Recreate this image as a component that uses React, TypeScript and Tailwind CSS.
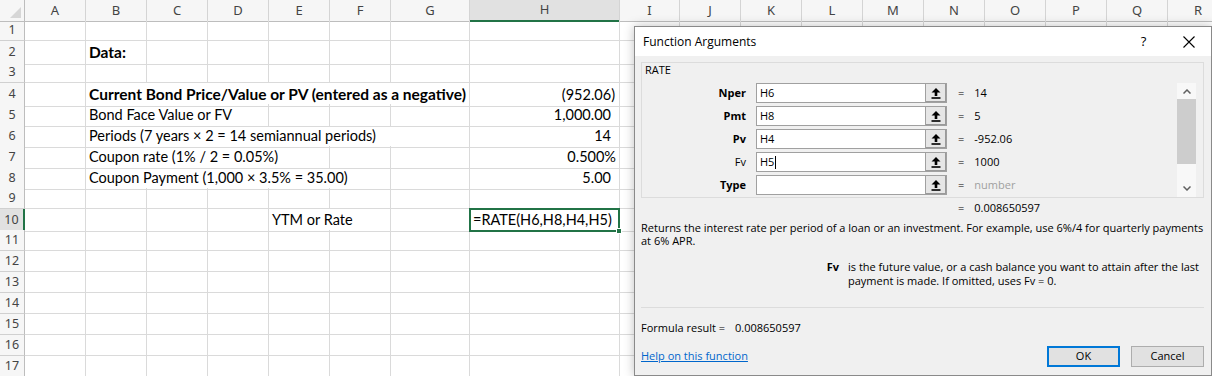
import React from 'react';

const COLS = ['A', 'B', 'C', 'D', 'E', 'F', 'G', 'H', 'I', 'J', 'K', 'L', 'M', 'N', 'O', 'P', 'Q', 'R'];

const GRID =
  'grid grid-cols-[25px_61px_61px_61px_61px_61px_61px_79px_150px_60px_61px_61px_61px_61px_61px_61px_61px_61px_61px]';

const SPAN: Record<number, string> = {
  1: '',
  2: 'col-span-2',
  3: 'col-span-3',
  4: 'col-span-4',
  5: 'col-span-5',
  6: 'col-span-6',
};

type Cell = {
  col: number;
  span?: number;
  text: string;
  bold?: boolean;
  right?: boolean;
  pr?: string;
  selected?: boolean;
};

// sheet contents, col index: A = 0
const DATA: Record<number, Cell[]> = {
  2: [{ col: 1, text: 'Data:', bold: true }],
  4: [
    { col: 1, span: 6, text: 'Current Bond Price/Value or PV (entered as a negative)', bold: true },
    { col: 7, text: '(952.06)', right: true, pr: 'pr-[4px]' },
  ],
  5: [
    { col: 1, span: 3, text: 'Bond Face Value or FV' },
    { col: 7, text: '1,000.00', right: true, pr: 'pr-[8px]' },
  ],
  6: [
    { col: 1, span: 6, text: 'Periods (7 years × 2 = 14 semiannual periods)' },
    { col: 7, text: '14', right: true, pr: 'pr-[8px]' },
  ],
  7: [
    { col: 1, span: 4, text: 'Coupon rate (1% / 2 = 0.05%)' },
    { col: 7, text: '0.500%', right: true, pr: 'pr-[3px]' },
  ],
  8: [
    { col: 1, span: 5, text: 'Coupon Payment (1,000 × 3.5% = 35.00)' },
    { col: 7, text: '5.00', right: true, pr: 'pr-[8px]' },
  ],
  10: [
    { col: 4, span: 2, text: 'YTM or Rate' },
    { col: 7, text: '=RATE(H6,H8,H4,H5)', selected: true },
  ],
};

const SheetRow: React.FC<{ n: number }> = ({ n }) => {
  const cells = DATA[n] || [];
  const out: React.ReactNode[] = [];
  let c = 0;
  while (c < COLS.length) {
    const cell = cells.find((x) => x.col === c);
    if (cell) {
      const span = cell.span || 1;
      out.push(
        <div
          key={c}
          className={`relative flex items-center whitespace-nowrap border-r border-b border-[#dadada] px-[3px] ${SPAN[span]} ${
            cell.right ? 'justify-end' : ''
          } ${cell.pr || ''} ${cell.bold ? 'font-bold text-[15.5px]' : ''}`}
        >
          {cell.text}
          {cell.selected && (
            <div className="absolute -left-px -top-px -right-px -bottom-px border-2 border-[#217346]">
              <div className="absolute -right-[4px] -bottom-[4px] h-[6px] w-[6px] border border-white bg-[#217346]" />
            </div>
          )}
        </div>
      );
      c += span;
    } else {
      out.push(<div key={c} className="border-r border-b border-[#dadada]" />);
      c += 1;
    }
  }
  const sel = n === 10;
  return (
    <div className={`${GRID} h-[21px]`}>
      <div
        className={`flex items-center justify-center border-b border-[#d0d0d0] text-[12.5px] text-[#444] ${
          sel ? 'border-r-2 border-r-[#217346] bg-[#e1e1e1]' : 'border-r border-r-[#bdbdbd] bg-[#f6f6f6]'
        }`}
        style={{ fontFamily: '"Noto Sans", sans-serif' }}
      >
        {n}
      </div>
      {out}
    </div>
  );
};

const RefIcon = () => (
  <svg width="10" height="11" viewBox="0 0 10 11">
    <path d="M5 0 L9.5 4.5 L6.3 4.5 L6.3 8 L3.7 8 L3.7 4.5 L0.5 4.5 Z" fill="#000" />
    <rect x="0.5" y="9.2" width="9" height="1.6" fill="#000" />
  </svg>
);

const ARGS = [
  { label: 'Nper', value: 'H6', result: '14', bold: true },
  { label: 'Pmt', value: 'H8', result: '5', bold: true },
  { label: 'Pv', value: 'H4', result: '-952.06', bold: true },
  { label: 'Fv', value: 'H5', result: '1000', bold: false, caret: true },
  { label: 'Type', value: '', result: 'number', bold: true, muted: true },
];

const Dialog = () => (
  <div
    className="absolute left-[634px] top-[26px] flex h-[350px] w-[578px] flex-col border border-[#8a8a8a] bg-[#f0f0f0] text-[11px] text-black shadow-[0_0_10px_rgba(0,0,0,0.25)]"
    style={{ fontFamily: '"Open Sans", sans-serif' }}
  >
    {/* title bar */}
    <div className="flex h-[29px] items-center bg-white pl-[8px]">
      <span className="flex-1 text-[12px]">Function Arguments</span>
      <div className="flex h-full w-[45px] items-center justify-center text-[13px]">?</div>
      <div className="flex h-full w-[45px] items-center justify-center">
        <svg width="12" height="12" viewBox="0 0 12 12">
          <path d="M0.5 0.5 L11.5 11.5 M11.5 0.5 L0.5 11.5" stroke="#000" strokeWidth="1.1" />
        </svg>
      </div>
    </div>

    <div className="flex flex-1 flex-col pl-[6px] pr-[7px]">
      {/* group box */}
      <div className="mt-[6px] flex h-[136px] flex-col border border-[#dcdcdc]">
        <div className="pl-[3px] leading-[14px]">RATE</div>
        <div className="mt-[6px] flex flex-1">
          <div className="flex flex-1 flex-col gap-[3px]">
            {ARGS.map((a) => (
              <div key={a.label} className="flex h-[20px] items-center">
                <div className={`w-[105px] pr-px text-right ${a.bold ? 'font-bold' : ''}`}>{a.label}</div>
                <div className="ml-[9px] flex h-full w-[170px] items-center border border-[#a0a0a0] bg-white pl-[3px]">
                  {a.value}
                  {a.caret && <span className="ml-px inline-block h-[13px] w-px bg-black" />}
                </div>
                <div className="flex h-full w-[21px] items-center justify-center border border-l-0 border-[#a0a0a0] bg-[#e6e6e6] shadow-[inset_-1px_-1px_0_#9a9a9a]">
                  <RefIcon />
                </div>
                <span className="ml-[11px]">=</span>
                <span className={`ml-[10px] ${a.muted ? 'text-[#a0a0a0]' : ''}`}>{a.result}</span>
              </div>
            ))}
          </div>
          <div className="mr-[7px] flex w-[19px] flex-col items-center bg-[#f8f8f8]">
            <div className="flex h-[16px] items-center">
              <svg width="8" height="5" viewBox="0 0 8 5">
                <path d="M0.5 4.5 L4 1 L7.5 4.5" fill="none" stroke="#606060" strokeWidth="1.5" />
              </svg>
            </div>
            <div className="h-[65px] w-full bg-[#cdcdcd]" />
            <div className="flex-1" />
            <div className="flex h-[18px] items-center">
              <svg width="8" height="5" viewBox="0 0 8 5">
                <path d="M0.5 0.5 L4 4 L7.5 0.5" fill="none" stroke="#606060" strokeWidth="1.5" />
              </svg>
            </div>
          </div>
        </div>
      </div>

      {/* overall result */}
      <div className="mt-[3px] flex leading-[14px]">
        <span className="ml-[317px]">=</span>
        <span className="ml-[10px]">0.008650597</span>
      </div>

      <div className="mt-[6px] whitespace-nowrap leading-[13px]">
        Returns the interest rate per period of a loan or an investment. For example, use 6%/4 for quarterly payments
        <br />
        at 6% APR.
      </div>

      <div className="mt-[13px] flex leading-[14px]">
        <div className="w-[198px] text-right font-bold">Fv</div>
        <div className="ml-[9px] whitespace-nowrap">
          is the future value, or a cash balance you want to attain after the last
          <br />
          payment is made. If omitted, uses Fv = 0.
        </div>
      </div>

      <div className="mt-[19px] h-px bg-[#dcdcdc]" />

      <div className="mt-[13px] flex leading-[14px]">
        <span>Formula result =</span>
        <span className="ml-[10px]">0.008650597</span>
      </div>

      <div className="mt-[11px] flex items-center">
        <span className="flex-1 text-[#0066cc] underline">Help on this function</span>
        <button className="flex h-[21px] w-[73px] items-center justify-center border-2 border-[#0078d7] bg-[#e1e1e1]">
          OK
        </button>
        <button className="ml-[11px] flex h-[21px] w-[73px] items-center justify-center border border-[#adadad] bg-[#e1e1e1]">
          Cancel
        </button>
      </div>
    </div>
  </div>
);

export default function App() {
  return (
    <div
      className="relative h-[376px] w-[1212px] overflow-hidden bg-white text-[14.5px] text-black"
      style={{ fontFamily: 'Lato, "Liberation Sans", sans-serif' }}
    >
      {/* column headers */}
      <div className={`${GRID} h-[20px] text-[13px] text-[#444]`} style={{ fontFamily: '"Noto Sans", sans-serif' }}>
        <div className="relative border-r border-b border-[#bdbdbd] bg-[#f6f6f6]">
          <svg className="absolute bottom-[3px] right-[3px]" width="11" height="11" viewBox="0 0 11 11">
            <path d="M11 0 L11 11 L0 11 Z" fill="#d6d6d6" />
          </svg>
        </div>
        {COLS.map((c) =>
          c === 'H' ? (
            <div
              key={c}
              className="flex items-center justify-center border-r border-b-2 border-r-[#d4d4d4] border-b-[#217346] bg-[#e1e1e1]"
            >
              {c}
            </div>
          ) : (
            <div
              key={c}
              className="flex items-center justify-center border-r border-b border-r-[#d4d4d4] border-b-[#bdbdbd] bg-[#f6f6f6]"
            >
              {c}
            </div>
          )
        )}
      </div>
      {Array.from({ length: 17 }, (_, i) => (
        <SheetRow key={i + 1} n={i + 1} />
      ))}
      <Dialog />
    </div>
  );
}
